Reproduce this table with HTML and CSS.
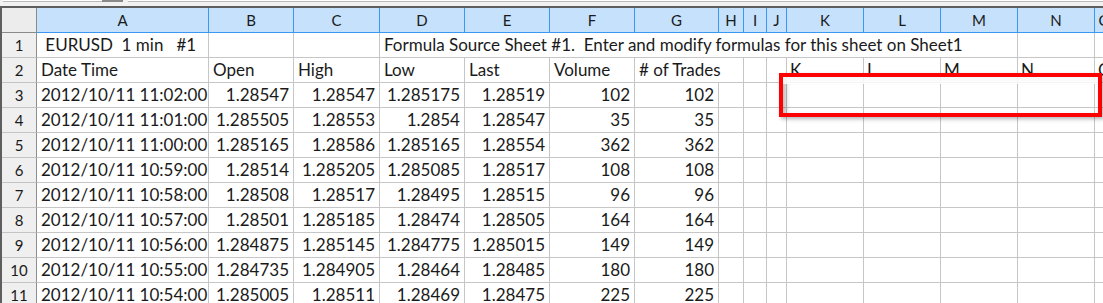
FILE: index.html
```html
<!DOCTYPE html>
<html>
<head>
<meta charset="utf-8">
<link rel="stylesheet" href="styles.css">
</head>
<body>
<div class="topbar">
  <div class="field field-name"><span class="knob"></span></div>
  <div class="field field-formula"></div>
</div>
<div class="sheet">
  <div class="grid">
    <div class="corner"></div>
    <div class="ch">A</div><div class="ch">B</div><div class="ch">C</div><div class="ch">D</div><div class="ch">E</div><div class="ch">F</div><div class="ch">G</div><div class="ch">H</div><div class="ch">I</div><div class="ch">J</div><div class="ch">K</div><div class="ch">L</div><div class="ch">M</div><div class="ch">N</div><div class="ch">O</div>

    <div class="rh">1</div><div class="c"> EURUSD  1 min   #1</div><div class="c"></div><div class="c"></div><div class="c span10">Formula Source Sheet #1.  Enter and modify formulas for this sheet on Sheet1</div><div class="c"></div><div class="c"></div>

    <div class="rh">2</div><div class="c">Date Time</div><div class="c">Open</div><div class="c">High</div><div class="c">Low</div><div class="c">Last</div><div class="c">Volume</div><div class="c span2"># of Trades</div><div class="c"></div><div class="c"></div><div class="c lbl">K</div><div class="c lbl">L</div><div class="c lbl">M</div><div class="c lbl">N</div><div class="c lbl">O</div>

    <div class="rh">3</div><div class="c n">2012/10/11 11:02:00</div><div class="c n">1.28547</div><div class="c n">1.28547</div><div class="c n">1.285175</div><div class="c n">1.28519</div><div class="c n">102</div><div class="c n">102</div><div class="c"></div><div class="c"></div><div class="c"></div><div class="c"></div><div class="c"></div><div class="c"></div><div class="c"></div><div class="c"></div>

    <div class="rh">4</div><div class="c n">2012/10/11 11:01:00</div><div class="c n">1.285505</div><div class="c n">1.28553</div><div class="c n">1.2854</div><div class="c n">1.28547</div><div class="c n">35</div><div class="c n">35</div><div class="c"></div><div class="c"></div><div class="c"></div><div class="c"></div><div class="c"></div><div class="c"></div><div class="c"></div><div class="c"></div>

    <div class="rh">5</div><div class="c n">2012/10/11 11:00:00</div><div class="c n">1.285165</div><div class="c n">1.28586</div><div class="c n">1.285165</div><div class="c n">1.28554</div><div class="c n">362</div><div class="c n">362</div><div class="c"></div><div class="c"></div><div class="c"></div><div class="c"></div><div class="c"></div><div class="c"></div><div class="c"></div><div class="c"></div>

    <div class="rh">6</div><div class="c n">2012/10/11 10:59:00</div><div class="c n">1.28514</div><div class="c n">1.285205</div><div class="c n">1.285085</div><div class="c n">1.28517</div><div class="c n">108</div><div class="c n">108</div><div class="c"></div><div class="c"></div><div class="c"></div><div class="c"></div><div class="c"></div><div class="c"></div><div class="c"></div><div class="c"></div>

    <div class="rh">7</div><div class="c n">2012/10/11 10:58:00</div><div class="c n">1.28508</div><div class="c n">1.28517</div><div class="c n">1.28495</div><div class="c n">1.28515</div><div class="c n">96</div><div class="c n">96</div><div class="c"></div><div class="c"></div><div class="c"></div><div class="c"></div><div class="c"></div><div class="c"></div><div class="c"></div><div class="c"></div>

    <div class="rh">8</div><div class="c n">2012/10/11 10:57:00</div><div class="c n">1.28501</div><div class="c n">1.285185</div><div class="c n">1.28474</div><div class="c n">1.28505</div><div class="c n">164</div><div class="c n">164</div><div class="c"></div><div class="c"></div><div class="c"></div><div class="c"></div><div class="c"></div><div class="c"></div><div class="c"></div><div class="c"></div>

    <div class="rh">9</div><div class="c n">2012/10/11 10:56:00</div><div class="c n">1.284875</div><div class="c n">1.285145</div><div class="c n">1.284775</div><div class="c n">1.285015</div><div class="c n">149</div><div class="c n">149</div><div class="c"></div><div class="c"></div><div class="c"></div><div class="c"></div><div class="c"></div><div class="c"></div><div class="c"></div><div class="c"></div>

    <div class="rh">10</div><div class="c n">2012/10/11 10:55:00</div><div class="c n">1.284735</div><div class="c n">1.284905</div><div class="c n">1.28464</div><div class="c n">1.28485</div><div class="c n">180</div><div class="c n">180</div><div class="c"></div><div class="c"></div><div class="c"></div><div class="c"></div><div class="c"></div><div class="c"></div><div class="c"></div><div class="c"></div>

    <div class="rh">11</div><div class="c n">2012/10/11 10:54:00</div><div class="c n">1.285005</div><div class="c n">1.28511</div><div class="c n">1.28469</div><div class="c n">1.28475</div><div class="c n">225</div><div class="c n">225</div><div class="c"></div><div class="c"></div><div class="c"></div><div class="c"></div><div class="c"></div><div class="c"></div><div class="c"></div><div class="c"></div>
  </div>
  <div class="callout"></div>
</div>
</body>
</html>
```

FILE: styles.css
```css
* { box-sizing: border-box; }

html, body {
  margin: 0;
  padding: 0;
  background: #ffffff;
  overflow: hidden;
}

body {
  font-family: Lato, "Open Sans", sans-serif;
  color: #1a1a1a;
  width: 1103px;
  height: 303px;
}

.topbar {
  height: 8px;
  background: #f1f1f1;
  border-bottom: 2px solid #5e5e5e;
  display: flex;
  align-items: flex-start;
  gap: 5px;
  padding-left: 3px;
}

.field {
  height: 2px;
  background: #ffffff;
  border-bottom: 1px solid #b9b9b9;
  position: relative;
}

.field-name { width: 120px; }
.field-formula { flex: 1; }

.knob {
  position: absolute;
  right: 0;
  top: 0;
  width: 21px;
  height: 2px;
  background: #8a8a8a;
}

.sheet {
  position: relative;
}

.grid {
  display: grid;
  grid-template-columns: 35px 172px 85px 86px 85px 85px 85px 84px 25px 23px 20px 77px 77px 77px 77px 20px;
  grid-auto-rows: 25px;
  border-left: 2px solid #5e5e5e;
  width: 1135px;
}

.corner {
  background: #ececec;
  border-right: 1px solid #8a8a8a;
  border-bottom: 1px solid #8a8a8a;
}

.ch {
  background: #c5e1fb;
  border-right: 1px solid #3a97f2;
  border-bottom: 1px solid #3a97f2;
  text-align: center;
  font-size: 15px;
  line-height: 25px;
  white-space: nowrap;
  overflow: hidden;
}

.rh {
  background: #efefef;
  border-right: 1px solid #8f8f8f;
  border-bottom: 1px solid #c4c4c4;
  text-align: center;
  font-size: 15px;
  line-height: 24px;
}

.c {
  border-right: 1px solid #c6c6c6;
  border-bottom: 1px solid #c6c6c6;
  font-size: 17px;
  line-height: 24px;
  padding: 0 4px;
  white-space: pre;
  overflow: hidden;
}

.n { text-align: right; }

.lbl { padding-left: 3px; }

.span10 { grid-column: span 10; }
.span2 { grid-column: span 2; }

.callout {
  position: absolute;
  left: 779px;
  top: 65px;
  width: 323px;
  height: 44px;
  border: 4px solid #ff0000;
  box-shadow: inset 3px 3px 5px rgba(0, 0, 0, 0.28), 2px 2px 4px rgba(0, 0, 0, 0.3);
}

.callout::before {
  content: "";
  position: absolute;
  left: 0;
  right: 0;
  top: 0;
  height: 7px;
  background: rgba(255, 255, 255, 0.85);
}
```
